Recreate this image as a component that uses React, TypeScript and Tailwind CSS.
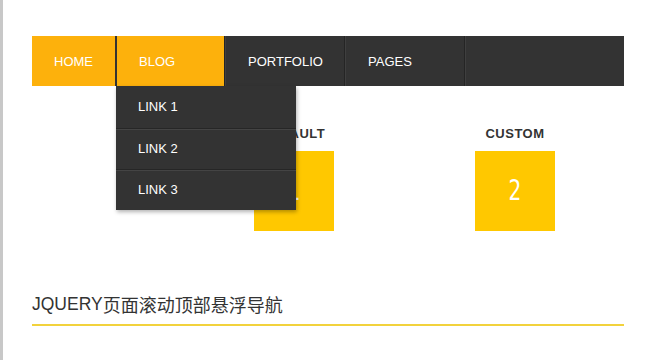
const navItems = [
  { label: 'HOME', width: 'w-[85px]', active: true },
  { label: 'BLOG', width: 'w-[108px]', active: true },
  { label: 'PORTFOLIO', width: 'w-[120px]', active: false },
  { label: 'PAGES', width: 'w-[120px]', active: false },
];

const links = ['LINK 1', 'LINK 2', 'LINK 3'];

function NavBar() {
  return (
    <div className="relative flex h-[50px] w-[592px] bg-[#333333] text-[13px] text-white font-['Liberation_Sans',Arial,sans-serif]">
      {navItems.map((item, i) => (
        <div
          key={item.label}
          className={`flex items-center pl-[22px] pt-[1px] ${item.width} ${
            item.active ? 'bg-[#fdb10c]' : 'bg-[#333333]'
          } ${i === 0 ? 'border-r-2 border-[#333333]' : 'border-r border-[#252525]'} ${
            i > 1 ? 'border-l border-l-[#3f3f3f]' : ''
          }`}
        >
          {item.label}
        </div>
      ))}
      <div className="flex-1 border-l border-[#3f3f3f]" />

      <div className="absolute left-[84px] top-[50px] w-[180px] bg-[#333333] shadow-[1px_2px_4px_rgba(0,0,0,0.3)]">
        {links.map((link, i) => (
          <div
            key={link}
            className={`flex items-center pl-[22px] ${
              i > 0 ? 'h-[41px] border-t border-[#262626] shadow-[inset_0_1px_0_#444444]' : 'h-[42px]'
            }`}
          >
            {link}
          </div>
        ))}
      </div>
    </div>
  );
}

function Demo({ title, num }: { title: string; num: string }) {
  return (
    <div className="flex flex-col items-center">
      <div className="h-[18px] text-[13px] font-bold tracking-[0.5px] text-[#333333] font-['Liberation_Sans',Arial,sans-serif]">
        {title}
      </div>
      <div className="mt-[9px] flex h-[80px] w-[80px] items-center justify-center bg-[#ffc800] text-white">
        <span className="inline-block scale-x-[0.72] text-[28px] font-['DejaVu_Sans',sans-serif]">{num}</span>
      </div>
    </div>
  );
}

export default function App() {
  return (
    <div className="h-[360px] w-[650px] overflow-hidden border-l-[3px] border-[#c8c8c8] bg-white pl-[29px] pt-[36px]">
      <div className="relative z-10">
        <NavBar />
      </div>
      <div className="flex pt-[38px]">
        <div className="ml-[222px]">
          <Demo title="DEFAULT" num="1" />
        </div>
        <div className="ml-[141px]">
          <Demo title="CUSTOM" num="2" />
        </div>
      </div>
      <div className="mt-[61px] flex h-[34px] w-[592px] items-start border-b-2 border-[#f2d23c] text-[#333333]">
        <span className="text-[17.5px] leading-[25px] font-['Liberation_Sans',Arial,sans-serif]">JQUERY</span>
        <span className="text-[18px] leading-[25px] font-['Noto_Sans_CJK_SC','Noto_Sans_CJK_JP',sans-serif]">
          页面滚动顶部悬浮导航
        </span>
      </div>
    </div>
  );
}
